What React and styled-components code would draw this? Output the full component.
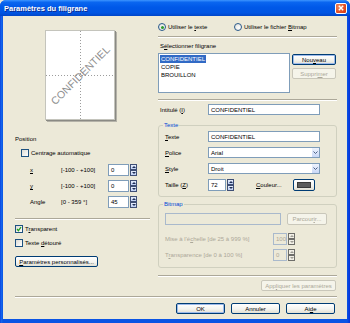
import React from 'react';
import styled, { createGlobalStyle } from 'styled-components';

const FONT = `"Liberation Sans", Arial, sans-serif`;

const Global = createGlobalStyle`
  html, body { margin: 0; padding: 0; background: #ECE9D8; }
  body { font-family: ${FONT}; }
  * { box-sizing: border-box; }
`;

const Window = styled.div`
  width: 350px;
  height: 323px;
  display: flex;
  flex-direction: column;
  background: linear-gradient(to right, #0831D9 0, #166AEE 1px, #0A54E4 3px, #0A54E4 347px, #0831D9 350px);
  border-radius: 6px 6px 0 0;
  overflow: hidden;
  font-family: ${FONT};
  font-size: 6px;
  color: #000;
`;

const TitleBar = styled.div`
  height: 16px;
  flex: none;
  display: flex;
  align-items: center;
  justify-content: space-between;
  padding: 0 3px 0 4px;
  background: linear-gradient(to bottom, #3D95FF 0%, #0A66F0 14%, #0058E8 45%, #0055E3 80%, #0046C8 100%);
`;

const TitleText = styled.span`
  color: #fff;
  font-weight: bold;
  font-size: 7.5px;
  text-shadow: 1px 1px 0 #0F2B8C;
  white-space: nowrap;
`;

const CloseButton = styled.div`
  width: 12px;
  height: 11px;
  border: 1px solid #fff;
  border-radius: 2px;
  background: radial-gradient(circle at 30% 30%, #F08A5E, #E0451C 70%, #C8380F);
  display: flex;
  align-items: center;
  justify-content: center;
`;

const Client = styled.div`
  flex: 1;
  margin: 0 3px 4px;
  background: #ECE9D8;
  display: flex;
  flex-direction: column;
  padding: 0 10px 0 12px;
`;

const Columns = styled.div`
  height: 280px;
  flex: none;
  display: grid;
  grid-template-columns: 135px 179px;
  column-gap: 8px;
`;

const Column = styled.div`
  display: flex;
  flex-direction: column;
  align-items: stretch;
`;

const Etched = styled.div`
  height: 2px;
  flex: none;
  border-top: 1px solid #ACA899;
  border-bottom: 1px solid #fff;
  margin-top: ${p => p.$mt || 0}px;
`;

const Caption = styled.div`
  height: 8px;
  line-height: 8px;
  white-space: nowrap;
  margin-top: ${p => p.$mt || 0}px;
  padding-left: ${p => p.$pl || 0}px;
`;

const PagePreview = styled.div`
  position: relative;
  width: 70px;
  height: 90px;
  margin: 14px 0 0 30px;
  background: #fff;
  border: 1px solid #C4C4BC;
  box-shadow: 1px 1px 0 #8A8A84, 2px 2px 0 #B4B2A8;
  display: flex;
  align-items: center;
  justify-content: center;
  overflow: hidden;
  &::before {
    content: '';
    position: absolute;
    left: 34px;
    top: 0;
    bottom: 0;
    width: 1px;
    background: repeating-linear-gradient(to bottom, #9C9C9C 0 1px, transparent 1px 3px);
  }
  &::after {
    content: '';
    position: absolute;
    top: 44px;
    left: 0;
    right: 0;
    height: 1px;
    background: repeating-linear-gradient(to right, #9C9C9C 0 1px, transparent 1px 3px);
  }
`;

const Watermark = styled.span`
  position: relative;
  z-index: 1;
  font-size: 10.5px;
  color: #8E8E8E;
  transform: rotate(-45deg);
  white-space: nowrap;
  letter-spacing: 0.1px;
`;

const CheckRow = styled.div`
  display: flex;
  align-items: center;
  gap: 2px;
  height: 8px;
  white-space: nowrap;
  margin-top: ${p => p.$mt || 0}px;
  padding-left: ${p => p.$pl || 0}px;
`;

const CheckBox = styled.span`
  width: 8px;
  height: 8px;
  flex: none;
  border: 1px solid #1C5180;
  background: linear-gradient(135deg, #DCDCD5, #FFFFFF);
  display: flex;
  align-items: center;
  justify-content: center;
`;

const CoordRow = styled.div`
  display: grid;
  grid-template-columns: 31px 47px auto;
  align-items: center;
  height: 12px;
  margin-top: ${p => p.$mt || 0}px;
  padding-left: 15px;
  white-space: nowrap;
`;

const SpinField = styled.div`
  display: flex;
  align-items: stretch;
  gap: 1px;
  height: 12px;
`;

const TextBox = styled.div`
  width: ${p => p.$w}px;
  height: ${p => p.$h || 11}px;
  flex: none;
  border: 1px solid ${p => (p.$disabled ? '#A9B9CC' : '#7F9DB9')};
  background: ${p => (p.$disabled ? '#ECE9D8' : '#fff')};
  color: ${p => (p.$disabled ? '#ACA899' : '#000')};
  padding-left: 2px;
  display: flex;
  align-items: center;
  white-space: nowrap;
  overflow: hidden;
`;

const SpinButtons = styled.div`
  width: 7px;
  display: flex;
  flex-direction: column;
`;

const SpinHalf = styled.div`
  flex: 1;
  border: 1px solid ${p => (p.$disabled ? '#6E6E6A' : '#3F4F75')};
  background: ${p => (p.$disabled ? '#F1EFE6' : 'linear-gradient(#E7EEFC, #BFD0F4)')};
  display: flex;
  align-items: center;
  justify-content: center;
  &::after {
    content: '';
    width: 0;
    height: 0;
    border-left: 2px solid transparent;
    border-right: 2px solid transparent;
    ${p => (p.$down ? 'border-top' : 'border-bottom')}: 2px solid ${p => (p.$disabled ? '#9D9C94' : '#1E2E56')};
  }
`;

const RadioRow = styled.div`
  display: flex;
  align-items: center;
  height: 10px;
  margin-top: 6px;
  white-space: nowrap;
`;

const RadioItem = styled.div`
  display: flex;
  align-items: center;
  gap: 2px;
  width: ${p => (p.$w ? `${p.$w}px` : 'auto')};
`;

const Radio = styled.span`
  width: 8px;
  height: 8px;
  flex: none;
  border-radius: 50%;
  border: 1px solid #2A5A8C;
  background: radial-gradient(circle at 65% 65%, #fff, #DCDCD5);
  display: flex;
  align-items: center;
  justify-content: center;
  &::after {
    content: '';
    display: ${p => (p.$on ? 'block' : 'none')};
    width: 3px;
    height: 3px;
    border-radius: 50%;
    background: #2E9A2E;
  }
`;

const ListRow = styled.div`
  display: flex;
  gap: 2px;
  margin-top: 3px;
  height: 40px;
`;

const ListBox = styled.div`
  width: 132px;
  height: 40px;
  border: 1px solid #7F9DB9;
  background: #fff;
  padding: 1px 0 0 1px;
  display: flex;
  flex-direction: column;
  align-items: flex-start;
`;

const ListItem = styled.div`
  height: 8px;
  line-height: 8px;
  padding: 0 1px;
  background: ${p => (p.$selected ? '#316AC5' : 'transparent')};
  color: ${p => (p.$selected ? '#fff' : '#000')};
`;

const ButtonStack = styled.div`
  display: flex;
  flex-direction: column;
  gap: 3px;
  padding-top: 1px;
`;

const Button = styled.button`
  width: ${p => p.$w}px;
  height: ${p => p.$h || 11}px;
  flex: none;
  padding: 0;
  margin: 0;
  font: inherit;
  font-size: 6px;
  border: 1px solid ${p => (p.$disabled ? '#C9C7BA' : '#003C74')};
  border-radius: 2px;
  background: ${p => (p.$disabled ? '#F5F4EA' : 'linear-gradient(#FFFFFF, #F4F4F0 55%, #E2E0D4)')};
  color: ${p => (p.$disabled ? '#ACA899' : '#000')};
  box-shadow: ${p => (p.$focus ? 'inset 0 0 0 1px #9DBAEA' : 'none')};
  display: flex;
  align-items: center;
  justify-content: center;
  white-space: nowrap;
  margin-top: ${p => p.$mt || 0}px;
  margin-left: ${p => p.$ml || 0}px;
  margin-right: ${p => p.$mr || 0}px;
  align-self: ${p => p.$align || 'auto'};
`;

const FormRow = styled.div`
  display: flex;
  align-items: center;
  height: ${p => p.$h || 11}px;
  margin-top: ${p => p.$mt || 0}px;
  white-space: nowrap;
`;

const RowLabel = styled.span`
  width: ${p => p.$w}px;
  flex: none;
  color: ${p => (p.$disabled ? '#ACA899' : 'inherit')};
  padding-left: ${p => p.$pl || 0}px;
`;

const GroupBox = styled.div`
  position: relative;
  border: 1px solid #D0D0BF;
  border-radius: 3px;
  margin-top: ${p => p.$mt}px;
  padding: ${p => p.$pad};
  display: flex;
  flex-direction: column;
`;

const GroupTitle = styled.span`
  position: absolute;
  top: -5px;
  left: 4px;
  padding: 0 1px;
  line-height: 8px;
  background: #ECE9D8;
  color: #0046D5;
`;

const DropArrow = styled.span`
  margin-left: auto;
  width: 8px;
  height: 100%;
  flex: none;
  border-left: 1px solid #fff;
  background: linear-gradient(#EEF3FD, #C9D8F7);
  display: flex;
  align-items: center;
  justify-content: center;
`;

const ColorSwatch = styled.span`
  width: 14px;
  height: 6px;
  background: #5C5C5C;
  border: 1px solid #3A3A3A;
`;

const ButtonBar = styled.div`
  display: flex;
  justify-content: flex-end;
  gap: 6px;
  margin-top: 5px;
  padding-right: 2px;
`;

function Spin({ value, w, disabled }) {
  return (
    <SpinField>
      <TextBox $w={w} $h={12} $disabled={disabled}>{value}</TextBox>
      <SpinButtons>
        <SpinHalf $disabled={disabled} />
        <SpinHalf $down $disabled={disabled} />
      </SpinButtons>
    </SpinField>
  );
}

function Chevron() {
  return (
    <svg width="5" height="3" viewBox="0 0 5 3">
      <path d="M0.5 0.5 L2.5 2.5 L4.5 0.5" fill="none" stroke="#4D6185" strokeWidth="1" />
    </svg>
  );
}

function Check() {
  return (
    <svg width="6" height="6" viewBox="0 0 6 6">
      <path d="M1 3 L2.4 4.6 L5 1.2" fill="none" stroke="#21A121" strokeWidth="1.3" />
    </svg>
  );
}

export default function App() {
  return (
    <>
      <Global />
      <Window>
        <TitleBar>
          <TitleText>Paramètres du filigrane</TitleText>
          <CloseButton>
            <svg width="6" height="6" viewBox="0 0 6 6">
              <path d="M0.8 0.8 L5.2 5.2 M5.2 0.8 L0.8 5.2" stroke="#fff" strokeWidth="1.4" />
            </svg>
          </CloseButton>
        </TitleBar>
        <Client>
          <Columns>
            <Column>
              <PagePreview>
                <Watermark>CONFIDENTIEL</Watermark>
              </PagePreview>
              <Caption $mt={15}>Position</Caption>
              <CheckRow $mt={6} $pl={6}>
                <CheckBox />
                <span>Centrage automatique</span>
              </CheckRow>
              <CoordRow $mt={7}>
                <span><u>x</u></span>
                <span>[-100 - +100]</span>
                <Spin value="0" w={21} />
              </CoordRow>
              <CoordRow $mt={4}>
                <span><u>y</u></span>
                <span>[-100 - +100]</span>
                <Spin value="0" w={21} />
              </CoordRow>
              <CoordRow $mt={4}>
                <span>Angle</span>
                <span>[0 - 359 °]</span>
                <Spin value="45" w={21} />
              </CoordRow>
              <Etched $mt={10} />
              <CheckRow $mt={5}>
                <CheckBox><Check /></CheckBox>
                <span>T<u>r</u>ansparent</span>
              </CheckRow>
              <CheckRow $mt={6}>
                <CheckBox />
                <span>Texte <u>d</u>étouré</span>
              </CheckRow>
              <Button $w={83} $mt={9}><span><u>P</u>aramètres personnalisés...</span></Button>
            </Column>

            <Column>
              <RadioRow>
                <RadioItem $w={76}>
                  <Radio $on />
                  <span>Utiliser le <u>t</u>exte</span>
                </RadioItem>
                <RadioItem>
                  <Radio />
                  <span>Utiliser le fichier <u>B</u>itmap</span>
                </RadioItem>
              </RadioRow>
              <Etched $mt={4} />
              <Caption $mt={4} $pl={2}>S<u>é</u>lectionner filigrane</Caption>
              <ListRow>
                <ListBox>
                  <ListItem $selected>CONFIDENTIEL</ListItem>
                  <ListItem>COPIE</ListItem>
                  <ListItem>BROUILLON</ListItem>
                </ListBox>
                <ButtonStack>
                  <Button $w={44} $focus><span>Nou<u>v</u>eau</span></Button>
                  <Button $w={44} $disabled><span>Suppri<u>m</u>er</span></Button>
                </ButtonStack>
              </ListRow>
              <Etched $mt={6} />
              <FormRow $mt={3}>
                <RowLabel $w={50} $pl={2}>Intitulé (<u>I</u>)</RowLabel>
                <TextBox $w={112}>CONFIDENTIEL</TextBox>
              </FormRow>

              <GroupBox $mt={10} $pad="5px 0 5px 6px">
                <GroupTitle>Texte</GroupTitle>
                <FormRow>
                  <RowLabel $w={43}><u>T</u>exte</RowLabel>
                  <TextBox $w={112}>CONFIDENTIEL</TextBox>
                </FormRow>
                <FormRow $mt={5}>
                  <RowLabel $w={43}><u>P</u>olice</RowLabel>
                  <TextBox $w={112}>
                    <span>Arial</span>
                    <DropArrow><Chevron /></DropArrow>
                  </TextBox>
                </FormRow>
                <FormRow $mt={5}>
                  <RowLabel $w={43}><u>S</u>tyle</RowLabel>
                  <TextBox $w={112}>
                    <span>Droit</span>
                    <DropArrow><Chevron /></DropArrow>
                  </TextBox>
                </FormRow>
                <FormRow $mt={5} $h={12}>
                  <RowLabel $w={43}>Taille (<u>Z</u>)</RowLabel>
                  <Spin value="72" w={18} />
                  <RowLabel $w={59} $pl={22}><u>C</u>ouleur...</RowLabel>
                  <Button as="div" $w={22} $h={12}>
                    <ColorSwatch />
                  </Button>
                </FormRow>
              </GroupBox>

              <GroupBox $mt={7} $pad="8px 0 6px 6px">
                <GroupTitle>Bitmap</GroupTitle>
                <FormRow $h={12}>
                  <TextBox $w={116} $h={12} $disabled />
                  <Button $w={40} $h={12} $ml={6} $disabled><span>Parcour<u>i</u>r...</span></Button>
                </FormRow>
                <FormRow $mt={8} $h={12}>
                  <RowLabel $w={108} $disabled>Mise à l'é<u>c</u>helle [de 25 à 999 %]</RowLabel>
                  <Spin value="100" w={14} disabled />
                </FormRow>
                <FormRow $mt={4} $h={12}>
                  <RowLabel $w={108} $disabled>T<u>r</u>ansparence [de 0 à 100 %]</RowLabel>
                  <Spin value="0" w={14} disabled />
                </FormRow>
              </GroupBox>

              <Etched $mt={7} />
              <Button $w={75} $mt={3} $disabled $align="flex-end" $mr={1}><span>App<u>l</u>iquer les paramètres</span></Button>
            </Column>
          </Columns>
          <Etched />
          <ButtonBar>
            <Button $w={49} $focus>OK</Button>
            <Button $w={49}>Annuler</Button>
            <Button $w={49}><span>Ai<u>d</u>e</span></Button>
          </ButtonBar>
        </Client>
      </Window>
    </>
  );
}
